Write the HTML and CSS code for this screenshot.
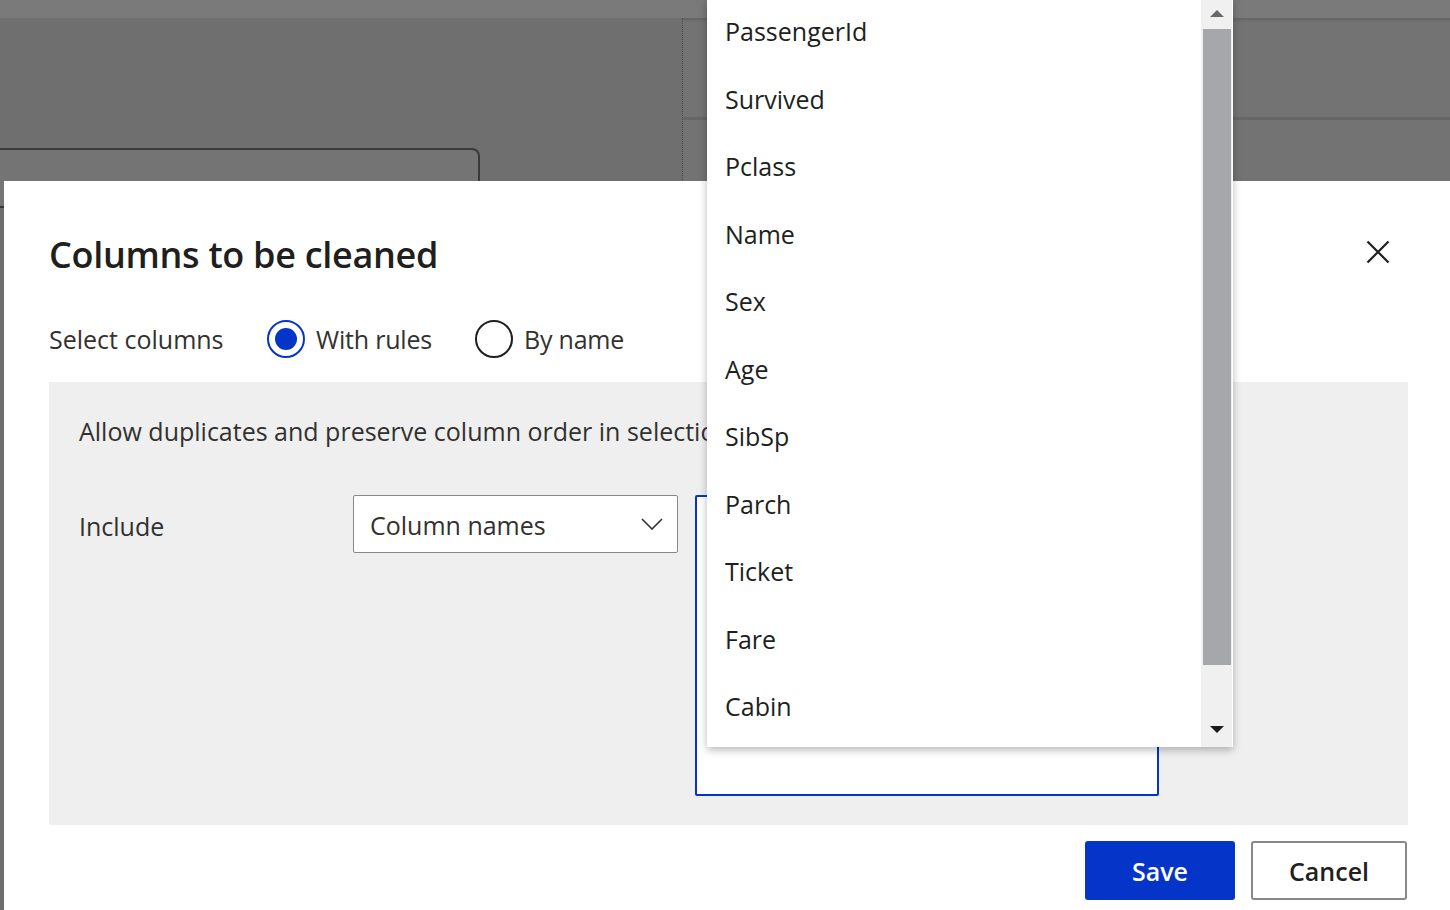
FILE: index.html
```html
<!DOCTYPE html>
<html>
<head>
<meta charset="utf-8">
<link rel="stylesheet" href="styles.css">
</head>
<body>
<div class="backdrop">
  <div class="bd-top"></div>
  <div class="bd-main">
    <div class="bd-left">
      <div class="bd-card"></div>
    </div>
    <div class="bd-right">
      <div class="bd-panel"></div>
      <div class="bd-panel2"></div>
    </div>
  </div>
</div>

<div class="dialog">
  <div class="dlg-head">
    <h1 class="title">Columns to be cleaned</h1>
    <button class="close" aria-label="Close">
      <svg width="24" height="24" viewBox="0 0 24 24"><path d="M1.5 1.5 L22.5 22.5 M22.5 1.5 L1.5 22.5" stroke="#201f1e" stroke-width="2.2" fill="none"/></svg>
    </button>
  </div>
  <div class="radio-row">
    <span class="label">Select columns</span>
    <label class="radio checked"><span class="dot"></span>With rules</label>
    <label class="radio"><span class="dot"></span>By name</label>
  </div>
  <div class="panel">
    <div class="panel-text">Allow duplicates and preserve column order in selection</div>
    <div class="include-row">
      <span class="inc-label">Include</span>
      <div class="select">
        <span>Column names</span>
        <svg class="chev" width="22" height="12" viewBox="0 0 22 12"><path d="M1 1 L11 11 L21 1" stroke="#323130" stroke-width="1.6" fill="none"/></svg>
      </div>
      <div class="input-box"></div>
    </div>
  </div>
  <div class="footer">
    <button class="btn primary">Save</button>
    <button class="btn secondary">Cancel</button>
  </div>
</div>

<div class="dropdown">
  <ul class="items">
    <li>PassengerId</li>
    <li>Survived</li>
    <li>Pclass</li>
    <li>Name</li>
    <li>Sex</li>
    <li>Age</li>
    <li>SibSp</li>
    <li>Parch</li>
    <li>Ticket</li>
    <li>Fare</li>
    <li>Cabin</li>
  </ul>
  <div class="scrollbar">
    <div class="arrow up"></div>
    <div class="thumb"></div>
    <div class="arrow down"></div>
  </div>
</div>
</body>
</html>
```

FILE: styles.css
```css
* { box-sizing: border-box; }
html, body {
  margin: 0;
  padding: 0;
}
body {
  width: 1450px;
  height: 910px;
  overflow: hidden;
  position: relative;
  background: #6f6f6f;
  font-family: "Open Sans", "Noto Sans", sans-serif;
  color: #201f1e;
}

/* backdrop */
.backdrop {
  width: 1450px;
  height: 910px;
  display: flex;
  flex-direction: column;
}
.bd-top {
  height: 18px;
  background: #7a7a7a;
  flex: none;
}
.bd-main {
  flex: 1;
  display: flex;
}
.bd-left {
  width: 683px;
  border-right: 1px dotted #4a4a4a;
  padding-top: 130px;
}
.bd-card {
  width: 480px;
  height: 60px;
  background: #747474;
  border: 2px solid #3a3a3a;
  border-left: none;
  border-radius: 0 8px 0 0;
}
.bd-right {
  flex: 1;
  padding-top: 2px;
  border-top: 2px solid #666;
}
.bd-panel {
  height: 98px;
  background: #737373;
  border-bottom: 3px solid #666;
}
.bd-panel2 {
  height: 100px;
  background: #737373;
}

/* dialog */
.dialog {
  position: absolute;
  left: 4px;
  top: 181px;
  right: 0;
  bottom: 0;
  background: #fff;
  padding: 0 42px 0 45px;
}
.dlg-head {
  display: flex;
  align-items: center;
  justify-content: space-between;
  margin-top: 52px;
  height: 44px;
}
.title {
  margin: 0;
  font-size: 36px;
  font-weight: 600;
  line-height: 44px;
  letter-spacing: -0.3px;
}
.close {
  border: none;
  background: none;
  padding: 0;
  width: 24px;
  height: 24px;
  margin-right: 18px;
  margin-top: -6px;
  display: flex;
}

.radio-row {
  margin-top: 42px;
  height: 40px;
  display: flex;
  align-items: center;
  font-size: 25px;
  color: #323130;
}
.label { width: 218px; }
.radio {
  display: flex;
  align-items: center;
  margin-right: 43px;
  letter-spacing: -0.2px;
}
.dot {
  width: 38px;
  height: 38px;
  border-radius: 50%;
  border: 2px solid #201f1e;
  margin-right: 11px;
  display: flex;
  align-items: center;
  justify-content: center;
}
.radio.checked .dot { border-color: #0535c8; }
.radio.checked .dot::after {
  content: "";
  width: 22px;
  height: 22px;
  border-radius: 50%;
  background: #0535c8;
}

.panel {
  margin-top: 23px;
  height: 443px;
  background: #efefef;
  padding: 33px 30px 0 30px;
}
.panel-text {
  font-size: 25px;
  line-height: 32px;
  color: #323130;
  white-space: nowrap;
}
.include-row {
  margin-top: 48px;
  display: flex;
  align-items: flex-start;
}
.inc-label {
  width: 274px;
  font-size: 25px;
  line-height: 62px;
  color: #323130;
}
.select {
  width: 325px;
  height: 58px;
  background: #fff;
  border: 1px solid #8a8886;
  border-radius: 2px;
  display: flex;
  align-items: center;
  justify-content: space-between;
  padding: 2px 14px 0 16px;
  font-size: 25px;
  color: #323130;
}
.chev { margin-top: -2px; }
.input-box {
  margin-left: 17px;
  width: 464px;
  height: 301px;
  background: #fff;
  border: 2px solid #0535c8;
  border-radius: 2px;
}

.footer {
  margin-top: 16px;
  display: flex;
  justify-content: flex-end;
  gap: 16px;
  padding-right: 1px;
}
.btn {
  height: 59px;
  font-family: inherit;
  font-size: 25px;
  font-weight: 600;
  border-radius: 3px;
  cursor: pointer;
  padding: 0;
}
.primary {
  width: 150px;
  background: #0535c8;
  color: #fff;
  border: none;
}
.secondary {
  width: 156px;
  background: #fff;
  color: #201f1e;
  border: 2px solid #8a8886;
}

/* dropdown */
.dropdown {
  position: absolute;
  left: 707px;
  top: -2px;
  width: 526px;
  height: 749px;
  background: #fff;
  box-shadow: 0 3px 8px rgba(0,0,0,0.28);
  display: flex;
}
.items {
  list-style: none;
  margin: 0;
  padding: 0 0 0 18px;
  flex: 1;
}
.items li {
  height: 67.5px;
  line-height: 67.5px;
  font-size: 25px;
  color: #201f1e;
}
.scrollbar {
  width: 31px;
  margin: 2px 1px 0 0;
  background: #f0f0f0;
  display: flex;
  flex-direction: column;
  align-items: center;
}
.arrow {
  width: 0;
  height: 0;
  border-left: 7px solid transparent;
  border-right: 7px solid transparent;
}
.arrow.up {
  border-bottom: 7px solid #6a6a6a;
  margin-top: 10px;
}
.thumb {
  width: 28px;
  height: 636px;
  background: #a6a7aa;
  margin-top: 12px;
}
.arrow.down {
  border-top: 7px solid #1a1a1a;
  margin-top: 61px;
}
```
